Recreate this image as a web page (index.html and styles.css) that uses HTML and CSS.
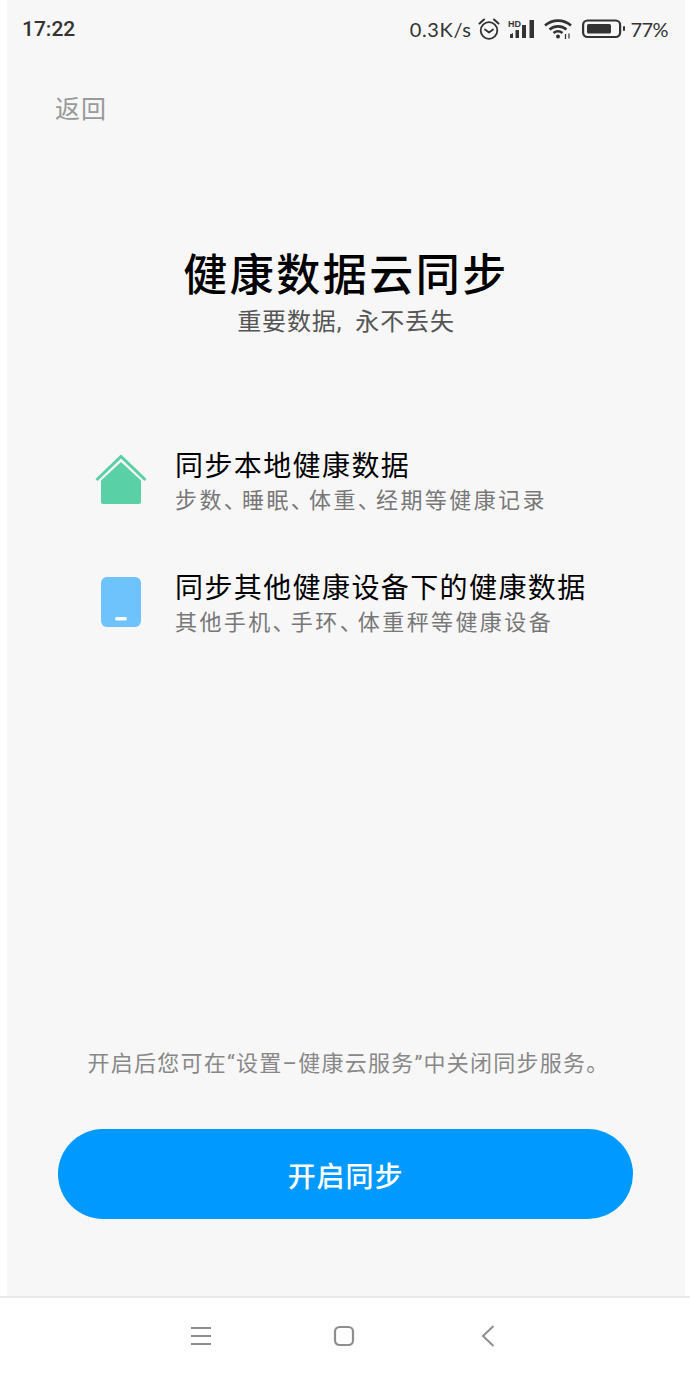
FILE: index.html
```html
<!DOCTYPE html>
<html lang="zh-CN">
<head>
    <meta charset="UTF-8">
    <meta name="viewport" content="width=device-width, initial-scale=1.0">
    <title>健康数据云同步</title>
    <link rel="stylesheet" href="styles.css">
</head>
<body>
    <main class="screen">
        <div class="status-bar">
            <span class="status-time">17:22</span>
            <div class="status-right">
                <span class="status-speed">0.3K/s</span>
                <svg class="icon-alarm" width="22" height="24" viewBox="1 0 22 24" fill="none" stroke="#333" stroke-width="1.800">
                    <circle cx="12" cy="13.500" r="8.300"/>
                    <path d="M8 12.500l4 3 4-3" stroke-linecap="round" stroke-linejoin="round"/>
                    <path d="M2.500 6.500l4.500-4M21.500 6.500l-4.500-4" stroke-linecap="round" stroke-width="2"/>
                </svg>
                <svg class="icon-signal" width="27" height="20" viewBox="0 0 27 20" fill="#333">
                    <path d="M2 15.500l3-1.500v5H2z"/>
                    <rect x="7.500" y="11" width="3.500" height="8"/>
                    <rect x="14" y="6" width="4" height="13"/>
                    <rect x="21.500" y="1" width="4.500" height="18"/>
                    <text x="0" y="7.500" class="signal-hd">HD</text>
                </svg>
                <svg class="icon-wifi" width="28" height="20" viewBox="0 0 28 20" fill="none" stroke="#333" stroke-width="2.600">
                    <path d="M1 6.500c7.500-6.500 18.500-6.500 26 0"/>
                    <path d="M5.500 10.500c5-4.200 12-4.200 17 0"/>
                    <path d="M9.500 14c2.800-2.200 6.200-2.200 9 0"/>
                    <circle cx="14" cy="17.500" r="2" fill="#333" stroke="none"/>
                    <path d="M21.500 15v5M25 14.500v5" stroke-width="1.200"/>
                </svg>
                <svg class="icon-battery" width="43" height="20" viewBox="0 0 43 20" fill="none">
                    <rect x="1.100" y="1.500" width="37" height="16.500" rx="4.500" stroke="#333" stroke-width="2.200"/>
                    <rect x="5" y="5" width="24" height="9.500" rx="1.500" fill="#333"/>
                    <rect x="41" y="7" width="2" height="5" rx="1" fill="#333"/>
                </svg>
                <span class="status-pct">77%</span>
            </div>
        </div>

        <a class="back-link">返回</a>

        <header class="hero">
            <h1>健康数据云同步</h1>
            <p>重要数据, 永不丢失</p>
        </header>

        <ul class="feature-list">
            <li class="feature">
                <div class="feature-icon">
                    <svg width="52" height="50" viewBox="0 0 52 50" fill="none">
                        <path d="M1.500 25L26 1.500 50.500 25" stroke="#5ad0a6" stroke-width="3"/>
                        <path d="M6 25.500L26 7l20 18.500V47a2 2 0 0 1-2 2H8a2 2 0 0 1-2-2z" fill="#5ad0a6"/>
                    </svg>
                </div>
                <div class="feature-text">
                    <div class="feature-title">同步本地健康数据</div>
                    <div class="feature-desc">步数<span class="pause">、</span>睡眠<span class="pause">、</span>体重<span class="pause">、</span>经期等健康记录</div>
                </div>
            </li>
            <li class="feature">
                <div class="feature-icon">
                    <svg width="40" height="50" viewBox="0 0 40 50">
                        <rect width="40" height="50" rx="6" fill="#6ec3fc"/>
                        <rect x="14" y="40" width="12" height="3.500" rx="1.700" fill="#fff"/>
                    </svg>
                </div>
                <div class="feature-text">
                    <div class="feature-title">同步其他健康设备下的健康数据</div>
                    <div class="feature-desc">其他手机<span class="pause">、</span>手环<span class="pause">、</span>体重秤等健康设备</div>
                </div>
            </li>
        </ul>

        <div class="bottom">
            <p class="note">开启后您可在“设置–健康云服务”中关闭同步服务。</p>
            <button class="primary-btn">开启同步</button>
        </div>
    </main>

    <nav class="nav-bar">
        <svg width="20" height="20" viewBox="0 0 20 20" stroke="#8e8e8e" stroke-width="2">
            <path d="M0 2h20M0 10h20M0 18h20"/>
        </svg>
        <svg width="22" height="22" viewBox="0 0 22 22" fill="none" stroke="#8e8e8e" stroke-width="2.200">
            <rect x="2" y="2" width="18" height="18" rx="4.500"/>
        </svg>
        <svg class="nav-back" width="14" height="22" viewBox="0 0 14 22" fill="none" stroke="#8e8e8e" stroke-width="2">
            <path d="M12.500 1L2 11l10.500 10"/>
        </svg>
    </nav>
</body>
</html>
```

FILE: styles.css
```css
* {
    box-sizing: border-box;
}
html, body {
    margin: 0;
    padding: 0;
}
body {
    width: 690px;
    height: 1379px;
    background-color: #fff;
    font-family: Roboto, "Noto Sans CJK SC", sans-serif;
    display: flex;
    flex-direction: column;
    overflow: hidden;
}
.screen {
    height: 1296px;
    margin: 0 5px 0 7px;
    background-color: #f7f7f7;
    display: flex;
    flex-direction: column;
}
.status-bar {
    height: 58px;
    padding: 0 17px 0 15px;
    display: flex;
    align-items: center;
    justify-content: space-between;
    color: #333;
    font-size: 21px;
    font-weight: 500;
}
.status-right {
    display: flex;
    align-items: center;
    font-family: Lato, sans-serif;
    font-weight: 400;
    font-size: 20px;
}
.status-speed {
    letter-spacing: 0.6px;
}
.icon-alarm {
    margin-left: 6px;
}
.icon-signal {
    margin-left: 8px;
}
.icon-wifi {
    margin-left: 9px;
}
.icon-battery {
    margin-left: 10px;
}
.status-pct {
    margin-left: 6px;
    letter-spacing: -0.6px;
}
.signal-hd {
    font-family: "Liberation Sans", sans-serif;
    font-size: 9px;
    font-weight: 700;
}
.back-link {
    margin: 35px 0 0 48px;
    color: #999;
    font-size: 25px;
    letter-spacing: 1px;
    line-height: 33px;
}
.hero {
    margin-top: 122px;
    text-align: center;
}
.hero h1 {
    margin: 0;
    color: #000;
    font-size: 44px;
    font-weight: 500;
    letter-spacing: 2.500px;
    line-height: 56px;
}
.hero p {
    margin: 2px 0 0;
    color: #555;
    font-size: 24px;
    letter-spacing: 0.900px;
    word-spacing: 6px;
    line-height: 32px;
}
.feature-list {
    list-style: none;
    margin: 105px 0 0;
    padding: 0 0 0 88px;
    display: flex;
    flex-direction: column;
    gap: 49px;
}
.feature {
    display: flex;
    align-items: center;
    gap: 28px;
}
.feature-icon {
    width: 52px;
    display: flex;
    justify-content: center;
}
.feature-text {
    padding-top: 5px;
}
.feature-title {
    color: #000;
    font-size: 28px;
    letter-spacing: 1.400px;
    line-height: 38px;
}
.feature-desc {
    color: #777;
    font-size: 22px;
    letter-spacing: 2.400px;
    line-height: 30px;
}
.pause {
    letter-spacing: -3.800px;
}
.bottom {
    margin-top: auto;
    padding: 0 52px 77px 51px;
    text-align: center;
}
.note {
    margin: 0 0 49px;
    padding-left: 6px;
    color: #888;
    font-size: 22px;
    letter-spacing: 1.250px;
    line-height: 32px;
}
.primary-btn {
    width: 100%;
    height: 90px;
    padding-top: 2px;
    border: none;
    border-radius: 45px;
    background-color: #0099ff;
    color: #fff;
    font-family: inherit;
    font-size: 28px;
    font-weight: 500;
    letter-spacing: 0.900px;
}
.nav-bar {
    flex: 1;
    border-top: 2px solid #e8e8e8;
    display: flex;
    align-items: center;
    gap: 122px;
    padding: 0 0 6px 191px;
}
.nav-back {
    margin-left: 4px;
}
```
